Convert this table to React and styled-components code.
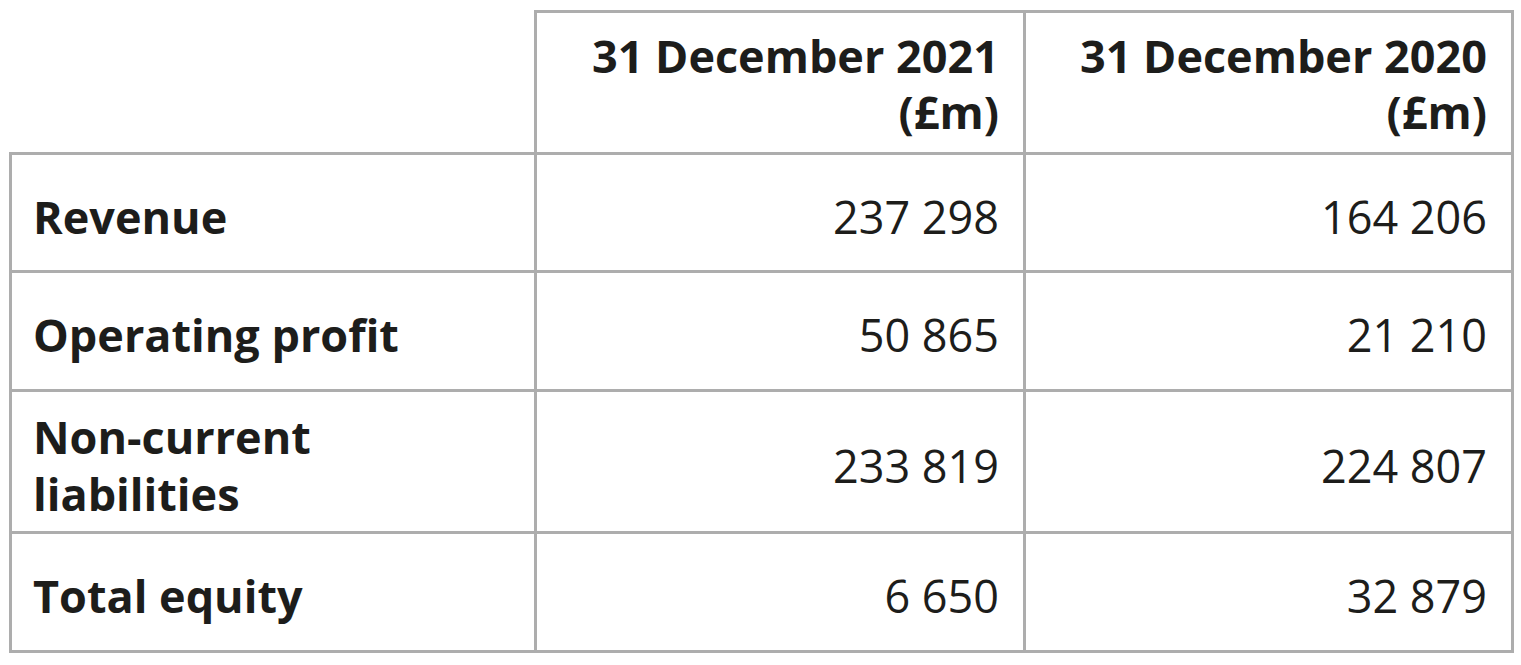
import styled, { createGlobalStyle } from "styled-components";

const GlobalStyle = createGlobalStyle`
   html, body {
      margin: 0;
      padding: 0;
      background: #ffffff;
   }
   body {
      font-family: "Open Sans", "Noto Sans", sans-serif;
      color: #1d1d1b;
   }
`;

const Page = styled.div`
   padding: 10px 10px 0 9px;
`;

const Table = styled.table`
   border-collapse: collapse;
   table-layout: fixed;
   width: 1502px;
`;

const Row = styled.tr`
   height: ${(p) => p.$h}px;
`;

const HeadCell = styled.th`
   border: 3px solid #adadad;
   padding: 2px 24px 0 23px;
   text-align: right;
   vertical-align: middle;
   font-weight: 700;
   font-size: 45px;
   line-height: 56px;
`;

const EmptyCell = styled.th`
   border-top: none;
   border-left: none;
   padding: 0;
`;

const LabelCell = styled.th`
   border: 3px solid #adadad;
   padding: 7px 24px 0 21px;
   text-align: left;
   vertical-align: middle;
   font-weight: 700;
   font-size: 45px;
   line-height: 57px;
`;

const ValueCell = styled.td`
   border: 3px solid #adadad;
   padding: 7px 24px 0 23px;
   text-align: right;
   vertical-align: middle;
   font-weight: 400;
   font-size: 45px;
   line-height: 57px;
`;

const rows = [
   { label: ["Revenue"], a: "237 298", b: "164 206", h: 118 },
   { label: ["Operating profit"], a: "50 865", b: "21 210", h: 119 },
   { label: ["Non-current", "liabilities"], a: "233 819", b: "224 807", h: 142 },
   { label: ["Total equity"], a: "6 650", b: "32 879", h: 119 },
];

export default function App() {
   return (
      <>
         <GlobalStyle />
         <Page>
            <Table>
               <colgroup>
                  <col style={{ width: 525 }} />
                  <col style={{ width: 489 }} />
                  <col style={{ width: 488 }} />
               </colgroup>
               <thead>
                  <Row $h={142}>
                     <EmptyCell />
                     <HeadCell>
                        31 December 2021
                        <br />
                        (£m)
                     </HeadCell>
                     <HeadCell>
                        31 December 2020
                        <br />
                        (£m)
                     </HeadCell>
                  </Row>
               </thead>
               <tbody>
                  {rows.map((r) => (
                     <Row key={r.a} $h={r.h}>
                        <LabelCell>
                           {r.label.map((line, i) => (
                              <span key={line}>
                                 {i > 0 && <br />}
                                 {line}
                              </span>
                           ))}
                        </LabelCell>
                        <ValueCell>{r.a}</ValueCell>
                        <ValueCell>{r.b}</ValueCell>
                     </Row>
                  ))}
               </tbody>
            </Table>
         </Page>
      </>
   );
}
